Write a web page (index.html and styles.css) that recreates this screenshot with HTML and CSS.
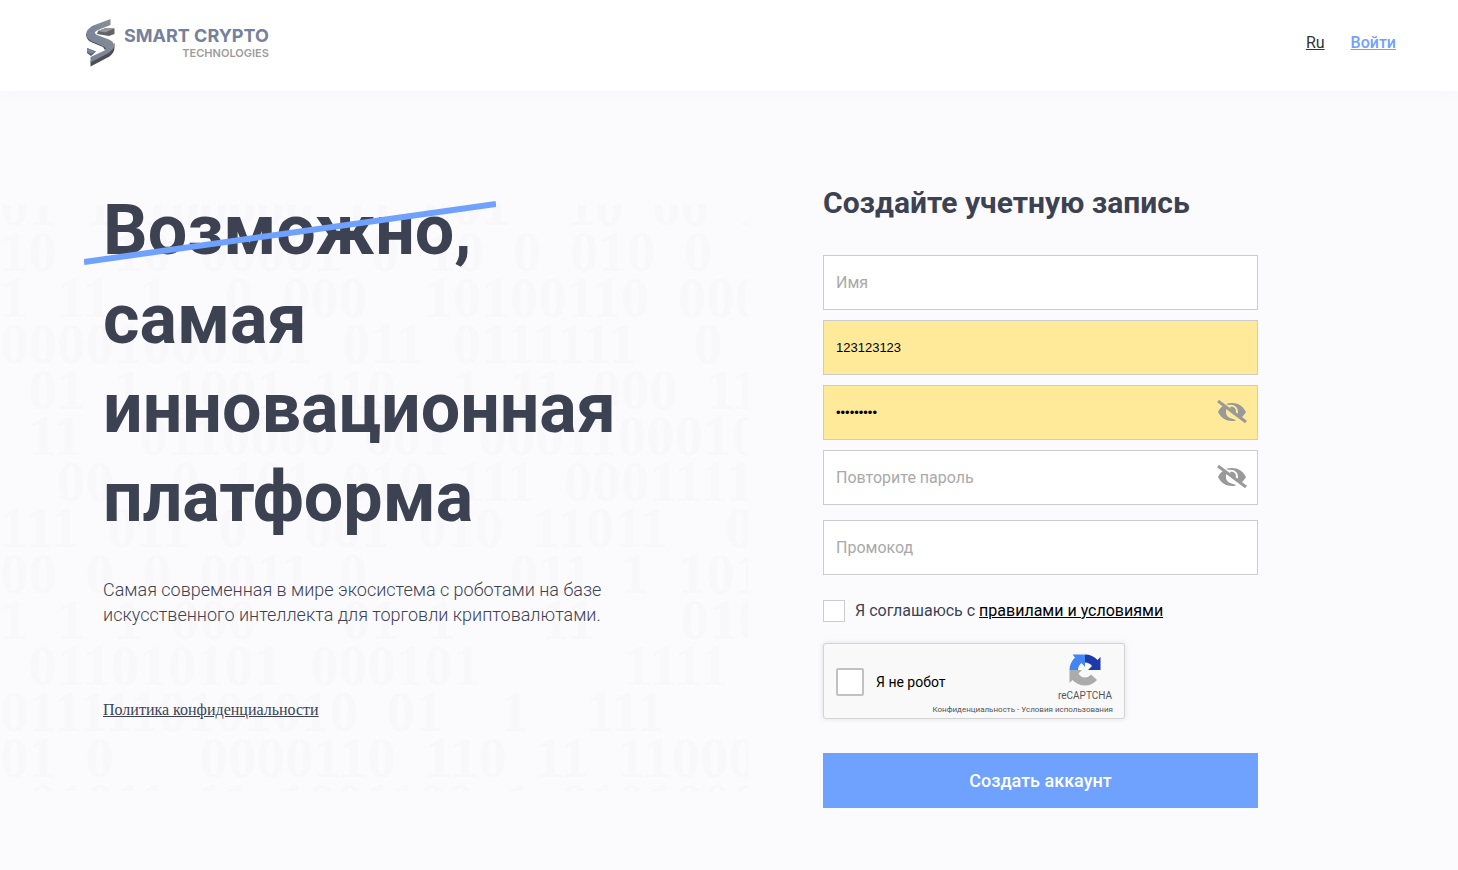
FILE: index.html
```html
<!DOCTYPE html>
<html lang="ru">
<head>
    <meta charset="UTF-8">
    <meta name="viewport" content="width=device-width, initial-scale=1.0">
    <title>Smart Crypto Technologies</title>
    <link rel="stylesheet" href="styles.css">
</head>
<body>
    <header class="header">
        <a href="#" class="logo">
            <svg class="logo-icon" width="30" height="48" viewBox="0 0 30 48" aria-hidden="true">
                <defs>
                    <linearGradient id="logoBand" x1="0" y1="1" x2="1" y2="0">
                        <stop offset="0" stop-color="#78839c"/>
                        <stop offset="0.5" stop-color="#7d8799"/>
                        <stop offset="1" stop-color="#8e8e90"/>
                    </linearGradient>
                </defs>
                <path d="M13 12l8-3 8.500.5V15l-5.500 2L12 15z" fill="#626366"/>
                <path d="M13 12l8-3 8.500.5L20 13.500z" fill="#96979a"/>
                <path d="M1 14c0 5 2 8 6 9.500L18 28l2 3 3-3-16-8z" fill="#4b4b4e"/>
                <path d="M2 29v5l4 3 5-4.500z" fill="#55575c"/>
                <path d="M2 29l9 3.500L6 35l-4-2z" fill="#7a86a2"/>
                <path d="M29.500 24v5c0 3-2 6-5 8.500L5.500 47.500V42l18-8.500z" fill="#4d4d50"/>
                <path d="M25.500 0v6L13 11c-4 2-4 3.500-1 5l12 4.500c5 2.500 6.500 6 4 9.500l-4.500 4L5.500 43.500V38l13-6c3-1.500 3-3 0-4.500L6 22C1 19 0 14 3 10.500L7 7z" fill="url(#logoBand)"/>
            </svg>
            <span class="logo-text">
                <span class="logo-name">SMART CRYPTO</span>
                <span class="logo-sub">TECHNOLOGIES</span>
            </span>
        </a>
        <nav class="nav">
            <a href="#" class="lang">Ru</a>
            <a href="#" class="login">Войти</a>
        </nav>
    </header>

    <main class="main">
        <!-- декоративный двоичный фон -->
        <pre class="binary" aria-hidden="true"></pre>

        <section class="promo">
            <h1>Возможно,<br>самая<br>инновационная<br>платформа</h1>
            <svg class="strike" width="412" height="66" viewBox="0 0 412 66" aria-hidden="true">
                <path d="M0 62L412 4" stroke="#6fa1ff" stroke-width="6"/>
            </svg>
            <p>Самая современная в мире экосистема с роботами на базе искусственного интеллекта для торговли криптовалютами.</p>
            <a href="#" class="policy">Политика конфиденциальности</a>
        </section>

        <form class="register" id="registerForm">
            <h2>Создайте учетную запись</h2>
            <div class="fields">
                <input type="text" name="name" placeholder="Имя" aria-label="Имя">
                <input type="text" name="login" class="filled" value="123123123" aria-label="Логин">
                <div class="password">
                    <input type="password" name="password" class="filled" value="123123123" aria-label="Пароль">
                    <button type="button" class="eye" aria-label="Показать пароль">
                        <svg width="30" height="24" viewBox="0 0 30 24">
                            <path d="M6 6C3 8 2 10 1 12c3 6 8 9 14 9 2 0 3 0 4-1l-3-1c-4-1-7-3-7-7 0-2 0-3 1-4zM9 4l3 1c5-1 9 2 9 7l-1 3 4 3c2-2 4-4 5-6-3-6-8-9-14-9-2 0-4 0-6 1z" fill="#999"/>
                            <path d="M13 7c3-1 6 1 6 4l-1 3-6-4 2 0z" fill="#999"/>
                            <path d="M1 1l28 21" stroke="#999" stroke-width="3"/>
                        </svg>
                    </button>
                </div>
                <div class="password">
                    <input type="password" name="repeat" placeholder="Повторите пароль" aria-label="Повторите пароль">
                    <button type="button" class="eye" aria-label="Показать пароль">
                        <svg width="30" height="24" viewBox="0 0 30 24">
                            <path d="M6 6C3 8 2 10 1 12c3 6 8 9 14 9 2 0 3 0 4-1l-3-1c-4-1-7-3-7-7 0-2 0-3 1-4zM9 4l3 1c5-1 9 2 9 7l-1 3 4 3c2-2 4-4 5-6-3-6-8-9-14-9-2 0-4 0-6 1z" fill="#999"/>
                            <path d="M13 7c3-1 6 1 6 4l-1 3-6-4 2 0z" fill="#999"/>
                            <path d="M1 1l28 21" stroke="#999" stroke-width="3"/>
                        </svg>
                    </button>
                </div>
                <input type="text" name="promo" class="promocode" placeholder="Промокод" aria-label="Промокод">
            </div>

            <div class="agree">
                <input type="checkbox" id="agree" name="agree">
                <label for="agree">Я соглашаюсь с <a href="#">правилами и условиями</a></label>
            </div>

            <div class="captcha">
                <div class="captcha-check">
                    <input type="checkbox" id="robot">
                    <label for="robot">Я не робот</label>
                </div>
                <div class="captcha-brand">
                    <svg width="32" height="32" viewBox="0 0 64 64" aria-hidden="true">
                        <path d="M32 1c10 0 19 4 25 11l6-6v26H38l8-8c-3-4-8-7-14-7z" fill="#1c3aa9"/>
                        <path d="M1 32C1 22 5 14 12 7L7 1h25v25l-7-8c-4 3-7 8-7 14z" fill="#4285f4"/>
                        <path d="M1 32h25l-7 7c3 5 7 8 13 8 5 0 9-2 12-6l12 11c-6 7-14 11-24 11S13 59 7 52l-6 6z" fill="#ababab"/>
                    </svg>
                    <span class="captcha-name">reCAPTCHA</span>
                </div>
                <div class="captcha-links"><a href="#">Конфиденциальность</a> - <a href="#">Условия использования</a></div>
            </div>

            <button type="submit" class="submit">Создать аккаунт</button>
        </form>
    </main>

    <script src="script.js"></script>
</body>
</html>
```
FILE: styles.css
```css
* {
    box-sizing: border-box;
}

body {
    margin: 0;
    min-height: 100vh;
    display: flex;
    flex-direction: column;
    background-color: #fbfbfe;
    color: #3d4252;
    font-family: Roboto, sans-serif;
}

.header {
    display: flex;
    justify-content: space-between;
    height: 91px;
    padding: 0 62px 0 85px;
    background-color: #fff;
    box-shadow: 0 0 12px #f3f5fb;
}

.logo {
    display: flex;
    gap: 9px;
    padding-top: 19px;
    text-decoration: none;
}

.logo-text {
    display: flex;
    flex-direction: column;
    align-items: flex-end;
    padding-top: 7px;
    font-family: Inter, sans-serif;
}

.logo-name {
    font-size: 18px;
    line-height: 20px;
    font-weight: 700;
    color: #75809c;
}

.logo-sub {
    font-size: 11px;
    line-height: 14px;
    font-weight: 600;
    color: #9c9c9c;
}

.nav {
    display: flex;
    gap: 26px;
    padding-top: 33px;
    font-size: 16px;
    line-height: 20px;
}

.lang {
    color: #333;
}

.login {
    color: #6fa1ff;
    font-weight: 500;
}

.main {
    position: relative;
    flex: 1;
    display: grid;
    grid-template-columns: minmax(0, 720px) minmax(0, 435px);
    padding: 94px 63px 62px 103px;
}

.binary {
    position: absolute;
    top: 114px;
    left: 0;
    width: 748px;
    height: 586px;
    margin: 0;
    padding-top: 14px;
    overflow: hidden;
    display: flex;
    flex-direction: column;
    justify-content: center;
    font-family: "Liberation Serif", serif;
    font-size: 57px;
    line-height: 46px;
    font-weight: 700;
    color: #f8f8fb;
}

.promo {
    position: relative;
}

h1 {
    margin: 0;
    padding-top: 1px;
    font-size: 70px;
    line-height: 89px;
    font-weight: 700;
}

.strike {
    position: absolute;
    top: 15px;
    left: -19px;
}

.promo p {
    max-width: 520px;
    margin: 35px 0 0;
    font-size: 18px;
    line-height: 25px;
    font-weight: 300;
}

.policy {
    display: inline-block;
    margin-top: 73px;
    font-family: "Liberation Serif", serif;
    font-size: 16px;
    line-height: 20px;
    color: #3d4252;
}

.register {
    position: relative;
}

h2 {
    margin: 0 0 34px;
    font-size: 30px;
    line-height: 36px;
    font-weight: 700;
}

.fields {
    display: flex;
    flex-direction: column;
    gap: 10px;
}

.fields input {
    display: block;
    width: 100%;
    height: 55px;
    padding: 0 12px;
    border: 1px solid #ccc;
    border-radius: 0;
    background-color: #fff;
    font-family: Roboto, sans-serif;
    font-size: 16px;
    color: #000;
}

.fields input::placeholder {
    color: #a9a9a9;
}

.fields .filled {
    background-color: #ffea9a;
    font-family: "Liberation Sans", Arial, sans-serif;
    font-size: 13px;
}

.fields .promocode {
    margin-top: 5px;
}

.password {
    position: relative;
}

.eye {
    position: absolute;
    top: 15px;
    right: 11px;
    padding: 0;
    border: none;
    background: none;
    cursor: pointer;
}

.eye svg {
    display: block;
}

.agree {
    display: flex;
    align-items: center;
    gap: 10px;
    margin-top: 25px;
    font-size: 16px;
    line-height: 22px;
}

.agree a {
    color: #000;
}

input[type="checkbox"] {
    appearance: none;
    width: 22px;
    height: 22px;
    margin: 0;
    border: 1px solid #ccc;
    background-color: #fff;
}

.captcha {
    display: grid;
    grid-template-columns: 1fr 56px;
    width: 302px;
    height: 76px;
    margin-top: 21px;
    padding: 10px 11px 0 12px;
    border: 1px solid #d3d3d3;
    border-radius: 3px;
    background-color: #f9f9f9;
    box-shadow: 0 0 4px 1px rgba(0, 0, 0, 0.08);
    color: #000;
}

.captcha-check {
    display: flex;
    align-items: center;
    gap: 12px;
    padding-top: 4px;
    font-size: 14px;
}

.captcha-check input[type="checkbox"] {
    width: 28px;
    height: 28px;
    border: 2px solid #c1c1c1;
    border-radius: 2px;
}

.captcha-brand {
    display: flex;
    flex-direction: column;
    align-items: center;
    color: #555;
}

.captcha-name {
    margin-top: 4px;
    font-size: 10px;
    line-height: 12px;
}

.captcha-links {
    grid-column: 1 / 3;
    font-size: 8px;
    line-height: 10px;
    text-align: right;
    color: #555;
}

.captcha-links a {
    color: #555;
    text-decoration: none;
}

.submit {
    display: block;
    width: 100%;
    height: 55px;
    margin-top: 34px;
    border: none;
    background-color: #6fa1ff;
    color: #fff;
    font-family: Roboto, sans-serif;
    font-size: 18px;
    font-weight: 500;
    cursor: pointer;
}
```
FILE: script.js
```js
const rows = [
    '01 1 100000 11 001  10 00 1',
    '10  10 00001 0 10 0 010 0',
    '1 11 1  0 000  10100110 0001',
    '00001000101 011 0111111  0',
    ' 01 1 1001 110  1 11 000 11',
    ' 11  0110000 001 0001100010',
    '  00  0 101 010 111 0001111',
    '111 011 0  001 010 11011  0',
    '00 0 0 0011 0     011 1 101',
    '1 1 1 000   01 1   11   010',
    ' 011010101 000101     1111',
    '0111110101010 01  1  111',
    '01 0   0000110 110 11 110000',
    ' 01011 11 1001100 1 0101000'
];

// пробел вдвое уже цифры, поэтому удваиваем
document.querySelector('.binary').textContent = rows.join('\n').replace(/ /g, '  ');

document.getElementById('registerForm').addEventListener('submit', function(event) {
    event.preventDefault();
});
```
